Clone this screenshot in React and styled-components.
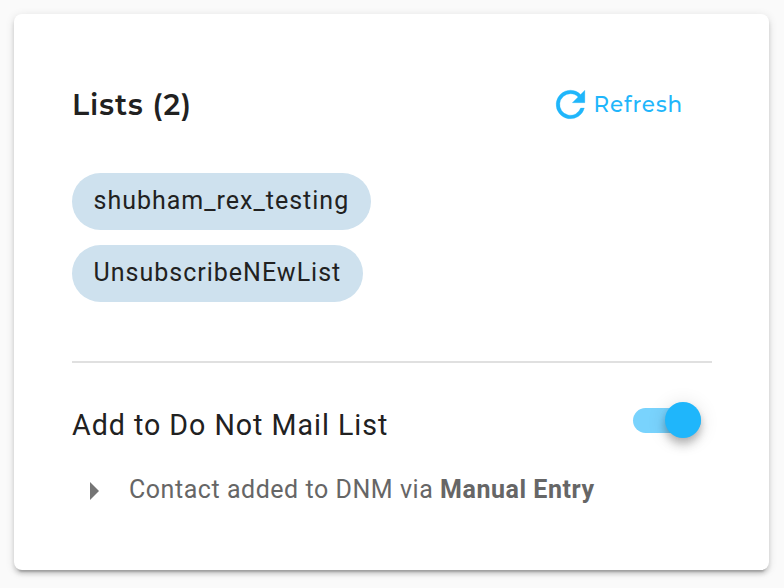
import React, { useState } from 'react'
import styled, { createGlobalStyle } from 'styled-components'

// STYLE
const GlobalStyle = createGlobalStyle`
  * {
    box-sizing: border-box;
  }

  body {
    margin: 0;
    background-color: #fafafa;
    color: #212121;
    font-family: Roboto, sans-serif;
  }
`
const Page = styled.div`
  display: flex;
  height: 588px;
  padding: 14px 15px 18px 14px;
`
const Card = styled.section`
  display: flex;
  flex: 1;
  flex-direction: column;
  padding: 70px 57px 0 58px;
  border-radius: 8px;
  background-color: #fff;
  box-shadow:
    0 6px 2px -4px rgba(0, 0, 0, 0.2),
    0 4px 4px rgba(0, 0, 0, 0.14),
    0 2px 10px rgba(0, 0, 0, 0.12);
`
const Header = styled.header`
  display: flex;
  align-items: center;
  justify-content: space-between;
  height: 42px;
`
const Title = styled.h2`
  margin: 0;
  font-family: Montserrat, Inter, sans-serif;
  font-size: 28.6px;
  font-weight: 600;
  line-height: 42px;
  letter-spacing: 0.95px;
  white-space: nowrap;
`
const RefreshButton = styled.button`
  display: flex;
  align-items: center;
  gap: 2px;
  margin: -2px 29px 0 0;
  padding: 0;
  border: none;
  background: none;
  color: #1fb6fb;
  font-family: Montserrat, Inter, sans-serif;
  font-size: 21.5px;
  font-weight: 500;
  line-height: 42px;
  letter-spacing: 0.85px;
  cursor: pointer;

  svg {
    width: 43px;
    height: 43px;
    fill: currentColor;
    stroke: currentColor;
    stroke-width: 0.15;
  }
`
const Chips = styled.div`
  display: flex;
  flex-direction: column;
  align-items: flex-start;
  gap: 15px;
  margin-top: 47px;
`
const Chip = styled.span`
  height: 57px;
  padding: 0 21.5px;
  border-radius: 29px;
  background-color: #cee1ee;
  font-size: 25px;
  line-height: 55px;
  letter-spacing: 1px;
`
const Divider = styled.hr`
  width: 100%;
  height: 2px;
  margin: 59px 0 0;
  border: none;
  background-color: #e0e0e0;
`
const Row = styled.div`
  display: flex;
  align-items: center;
  justify-content: space-between;
  height: 40px;
  margin-top: 37px;
  padding-right: 11px;
`
const Label = styled.span`
  padding-top: 9px;
  font-size: 28.6px;
  line-height: 40px;
  letter-spacing: 0.98px;
`
const Track = styled.button`
  display: flex;
  align-items: center;
  justify-content: ${({ $on }) => ($on ? 'flex-end' : 'flex-start')};
  width: 68px;
  height: 25px;
  padding: 0;
  border: none;
  border-radius: 13px;
  background-color: ${({ $on }) => ($on ? '#79d3fd' : '#9e9e9e')};
  cursor: pointer;
`
const Thumb = styled.span`
  width: 36px;
  height: 36px;
  border-radius: 50%;
  background-color: ${({ $on }) => ($on ? '#1fb6fb' : '#fff')};
  box-shadow:
    0 4px 8px -2px rgba(0, 0, 0, 0.2),
    0 8px 10px rgba(0, 0, 0, 0.14),
    0 2px 20px rgba(0, 0, 0, 0.12);
`
const Detail = styled.div`
  display: flex;
  align-items: center;
  height: 40px;
  margin-top: 30px;
  padding-left: 18px;
  color: #666;
  font-size: 25px;
  line-height: 40px;
  letter-spacing: 0.54px;
  white-space: nowrap;

  b {
    font-weight: 700;
  }
`
const Arrow = styled.span`
  margin: 1px 30px 0 0;
  border-top: 9px solid transparent;
  border-bottom: 9px solid transparent;
  border-left: 9px solid #757575;
`

const LISTS = ['shubham_rex_testing', 'UnsubscribeNEwList']

const App = () => {
  const [doNotMail, setDoNotMail] = useState(true)

  return (
    <Page>
      <GlobalStyle />
      <Card>
        <Header>
          <Title>Lists ({LISTS.length})</Title>
          <RefreshButton>
            <svg viewBox="0 0 24 24">
              <path d="M17.65 6.35A7.96 7.96 0 0 0 12 4a8 8 0 1 0 7.73 10h-2.08A6 6 0 1 1 12 6c1.66 0 3.14.69 4.22 1.78L13 11h7V4z" />
            </svg>
            Refresh
          </RefreshButton>
        </Header>
        <Chips>
          {LISTS.map((name) => (
            <Chip key={name}>{name}</Chip>
          ))}
        </Chips>
        <Divider />
        <Row>
          <Label>Add to Do Not Mail List</Label>
          <Track
            role="switch"
            aria-checked={doNotMail}
            $on={doNotMail}
            onClick={() => setDoNotMail(!doNotMail)}
          >
            <Thumb $on={doNotMail} />
          </Track>
        </Row>
        <Detail>
          <Arrow />
          <span>
            Contact added to DNM via <b>Manual Entry</b>
          </span>
        </Detail>
      </Card>
    </Page>
  )
}

export default App
